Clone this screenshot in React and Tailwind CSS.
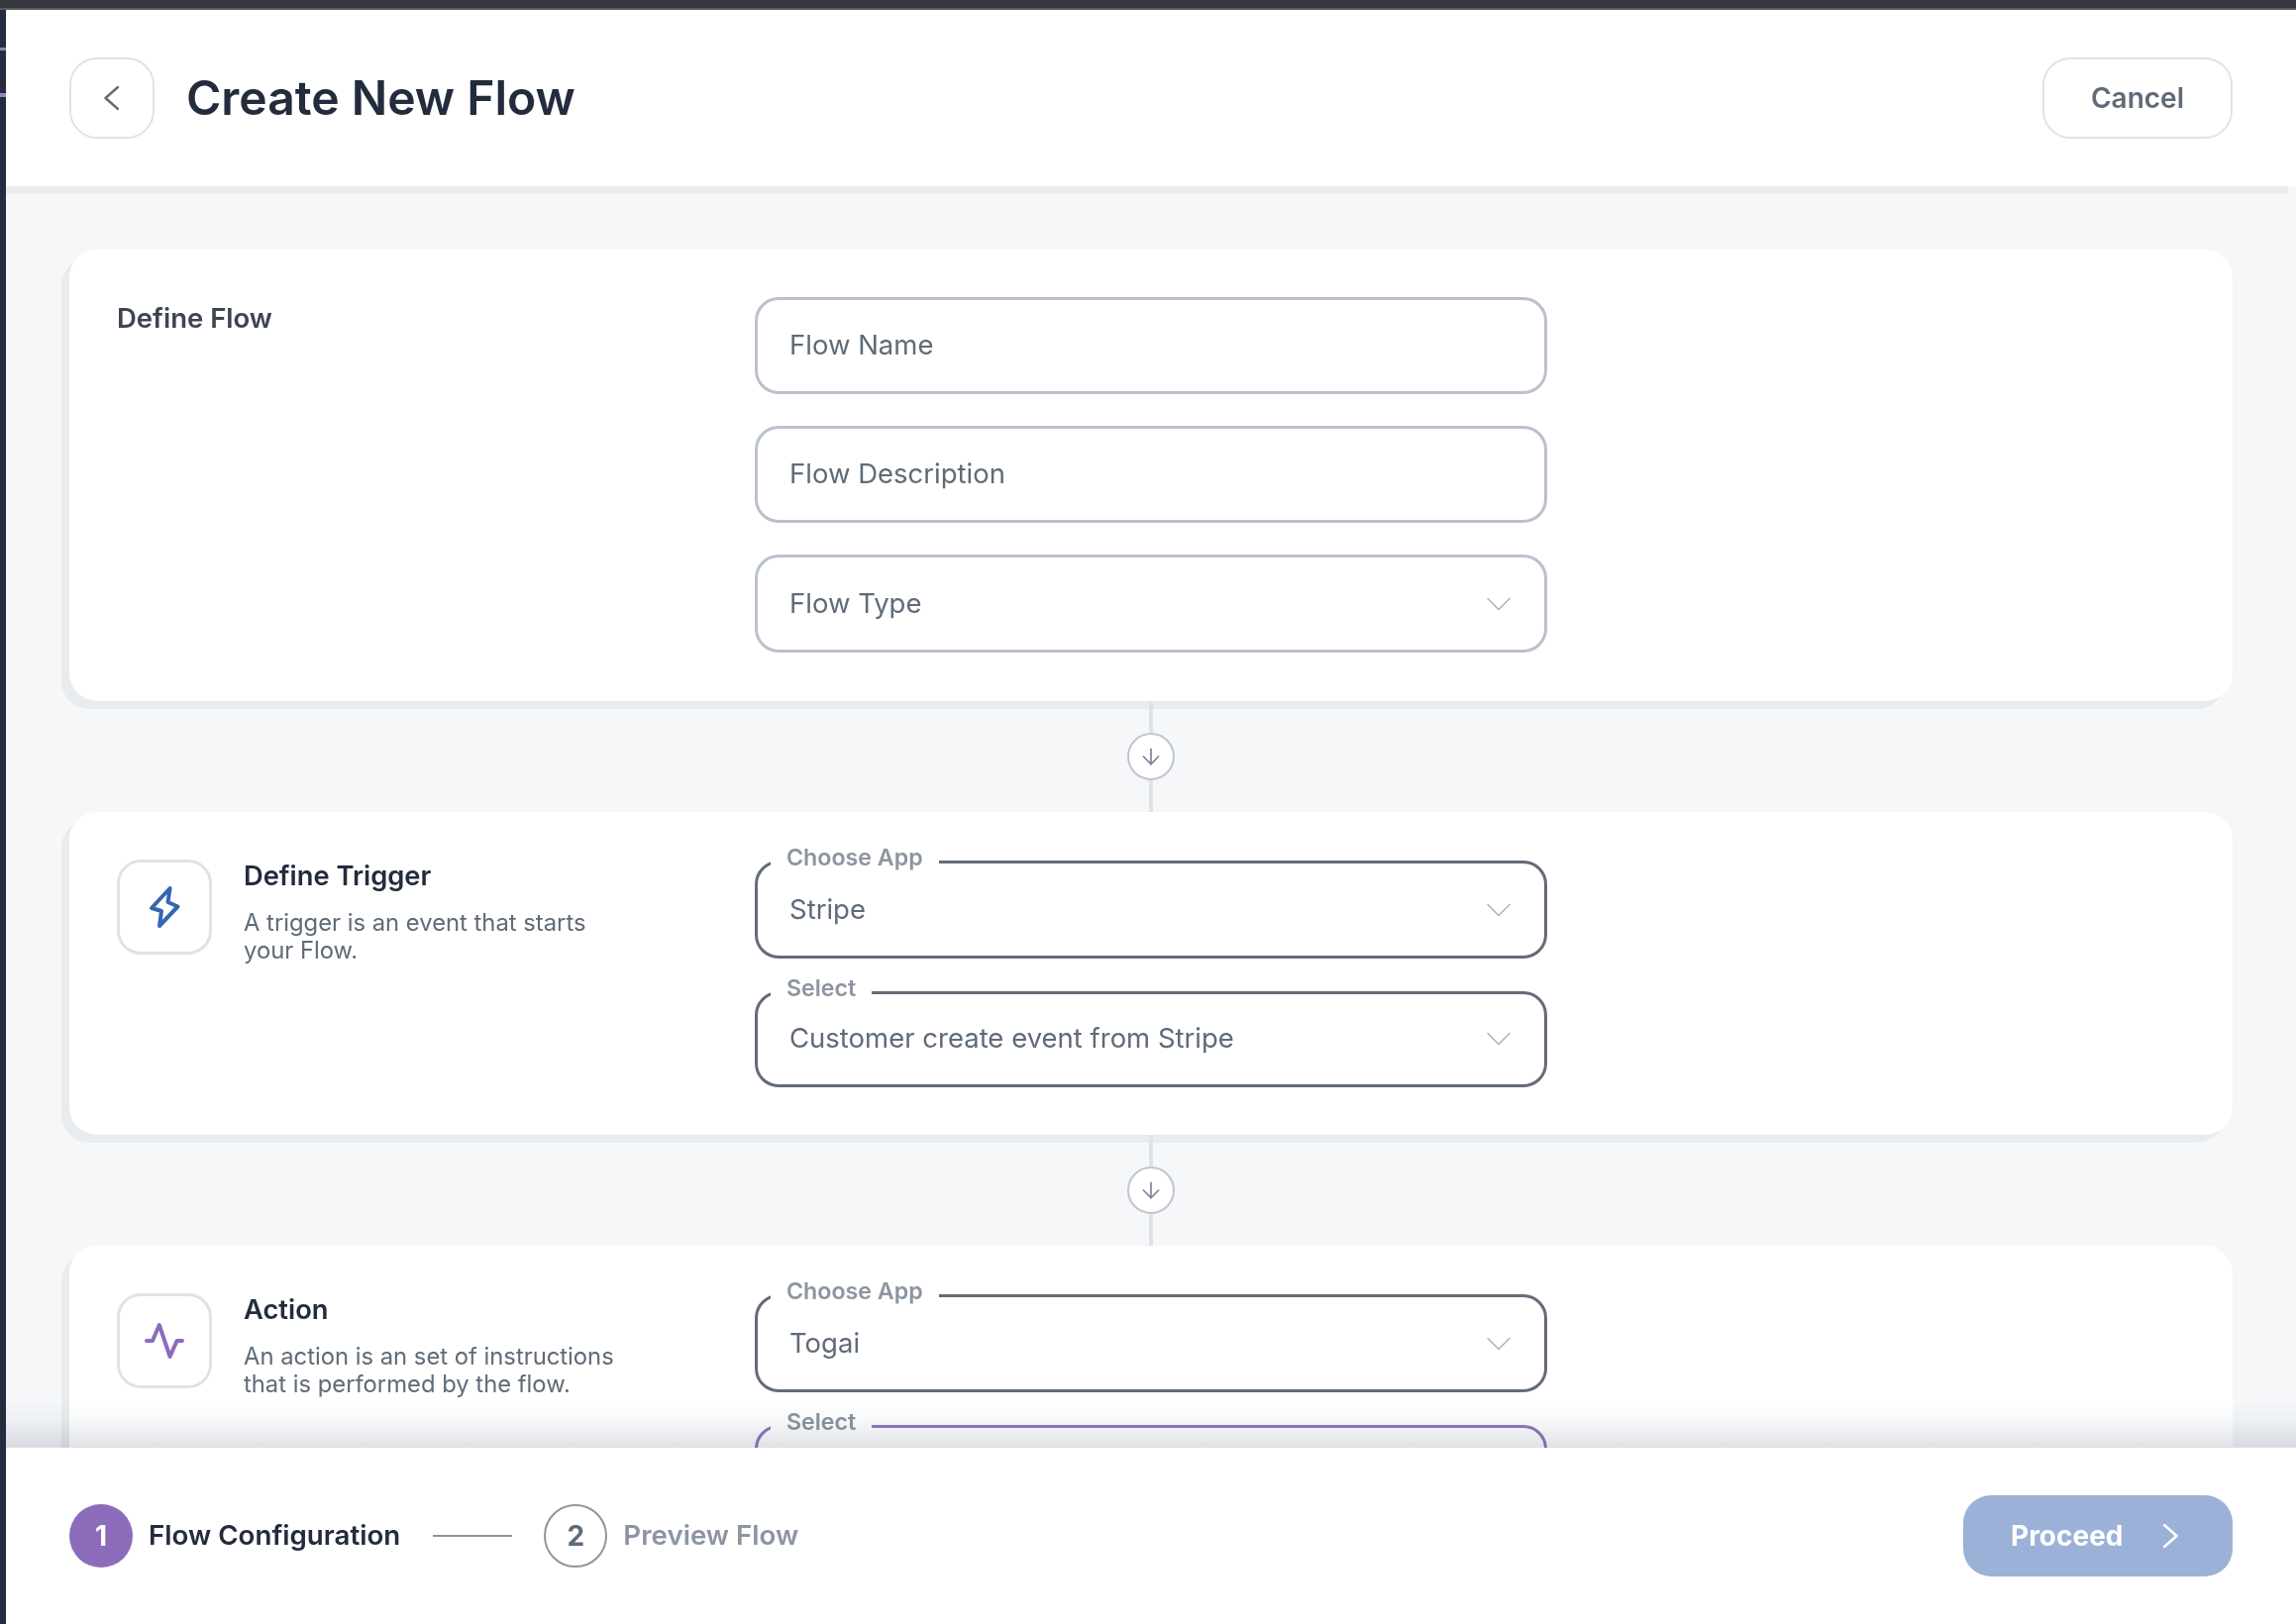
import { ChevronDown, ArrowDown } from "lucide-react";

const Input = ({ label, select, className }) => (
  <div className={`flex items-center justify-between rounded-[24px] border-[3px] border-[#b9c2cc] bg-white pl-[32px] pr-[24px] ${className || "h-[98px]"}`}>
    <span className="text-[27.5px] text-[#5f6b78]">{label}</span>
    {select && <ChevronDown className="h-[44px] w-[44px] text-[#a9b0ba]" strokeWidth={0.8} />}
  </div>
);

const Field = ({ legend, value, purple, short }) => (
  <fieldset
    className={`m-0 rounded-[24px] border-[3px] p-0 pl-[32px] pr-[24px] ${purple ? "border-[#9279c0]" : "border-[#636c78]"}`}
  >
    <legend className="relative top-[-4px] ml-[-19px] px-[16px] text-[23.2px] font-semibold leading-[28px] text-[#8c95a1]">{legend}</legend>
    <div className={`flex items-center justify-between ${short ? "h-[79px] pb-[13px]" : "h-[81px] pb-[12px]"}`}>
      <span className="text-[27.5px] text-[#5f6b78]">{value}</span>
      <ChevronDown className="h-[44px] w-[44px] text-[#a9b0ba]" strokeWidth={0.8} />
    </div>
  </fieldset>
);

const Connector = () => (
  <div className="relative flex h-[112px] items-center justify-center">
    <div className="absolute bottom-0 top-0 w-[4px] bg-[#dfe3e8]" />
    <div className="relative flex h-[48px] w-[48px] items-center justify-center rounded-full border-2 border-[#bfc6d0] bg-white">
      <ArrowDown className="h-[26px] w-[26px] text-[#7d8794]" strokeWidth={1.6} />
    </div>
  </div>
);

const Intro = ({ icon, title, children }) => (
  <div className="flex w-[644px] shrink-0 items-start pt-[12px]">
    <div className="flex h-[96px] w-[96px] shrink-0 items-center justify-center rounded-[24px] border-[3px] border-[#dfe3e8]">
      {icon}
    </div>
    <div className="ml-[32px] w-[400px]">
      <h3 className="text-[27.3px] font-semibold leading-[34px] text-[#232c3d]">{title}</h3>
      <p className="mt-[16px] text-[23.8px] leading-[28px] text-[#5f6b78]">{children}</p>
    </div>
  </div>
);

const Card = ({ children, className }) => (
  <section className={`flex rounded-[28px] bg-white px-[48px] shadow-[-8px_8px_0_0_#e9ecee] ${className || ""}`}>
    {children}
  </section>
);

export default function App() {
  return (
    <div className="relative flex h-[1640px] w-[2318px] flex-col overflow-hidden bg-[#252c3f] font-['Inter',sans-serif]">
      <div className="h-[10px] shrink-0 border-b-2 border-[#5a5a60] bg-[#36373c]" />
      {/* bits of the window behind, showing in the left strip */}
      <div className="absolute left-0 top-[48px] h-[3px] w-[6px] bg-[#8f7fb8]" />
      <div className="absolute left-0 top-[94px] h-[4px] w-[6px] bg-[#9b84c9]" />

      <div className="ml-[6px] flex min-h-0 flex-1 flex-col bg-[#f5f7f9]">
        {/* Header */}
        <header className="flex h-[178px] shrink-0 items-center justify-between bg-white pb-[1px] pl-[64px] pr-[64px]">
          <div className="flex items-center gap-[32px]">
            <button className="flex h-[82px] w-[86px] items-center justify-center rounded-[28px] border-2 border-[#dfe3e8] pr-[2px]">
              <svg width="15" height="24" viewBox="0 0 15 24" fill="none" stroke="#5f6b78" strokeWidth="2.4" strokeLinecap="round" strokeLinejoin="round">
                <path d="M14 1 1.5 12 14 23" />
              </svg>
            </button>
            <h1 className="text-[48px] font-semibold text-[#232c3d]">Create New Flow</h1>
          </div>
          <button className="flex h-[82px] w-[192px] items-center justify-center rounded-[28px] border-2 border-[#dfe3e8] text-[28px] font-semibold text-[#5f6b78]">
            Cancel
          </button>
        </header>
        <div className="mr-[8px] h-[8px] shrink-0 bg-[#e9ecee]" />

        {/* Scrolling content */}
        <main className="relative min-h-0 flex-1 overflow-hidden">
          <div className="ml-[64px] mr-[64px] pt-[56px]">
            <Card className="h-[456px] pt-[48px]">
              <div className="w-[644px] shrink-0">
                <h3 className="pt-[4px] text-[27.5px] font-semibold leading-[34px] text-[#3d4551]">Define Flow</h3>
              </div>
              <div className="flex w-[800px] flex-col gap-[32px]">
                <Input label="Flow Name" />
                <Input label="Flow Description" />
                <Input label="Flow Type" select className="h-[99px]" />
              </div>
            </Card>
            <Connector />
            <Card className="h-[326px] pt-[36px]">
              <Intro
                title="Define Trigger"
                icon={
                  <svg width="48" height="48" viewBox="0 0 48 48" fill="none" stroke="#3367b5" strokeWidth="4" strokeLinejoin="round" strokeLinecap="round">
                    <path d="M29.6 5 11 25l10 3-2 15 18.5-19.5-10-4.5z" />
                  </svg>
                }
              >
                A trigger is an event that starts your Flow.
              </Intro>
              <div className="flex w-[800px] flex-col gap-[20px]">
                <Field legend="Choose App" value="Stripe" />
                <Field legend="Select" value="Customer create event from Stripe" short />
              </div>
            </Card>
            <Connector />
            <Card className="h-[326px] pt-[36px]">
              <Intro
                title="Action"
                icon={
                  <svg width="48" height="48" viewBox="0 0 48 48" fill="none" stroke="#8c6cba" strokeWidth="4" strokeLinejoin="round" strokeLinecap="round">
                    <path d="M6 24h6l6.8-16 10.8 32 7-16H42" />
                  </svg>
                }
              >
                An action is an set of instructions that is performed by the flow.
              </Intro>
              <div className="flex w-[800px] flex-col gap-[20px]">
                <Field legend="Choose App" value="Togai" />
                <Field legend="Select" value="" purple short />
              </div>
            </Card>
          </div>
          {/* fade above the footer */}
          <div className="pointer-events-none absolute inset-x-0 bottom-0 h-[48px] bg-gradient-to-b from-white via-[#f8f9fa] via-40% to-[#dfe1e6] mix-blend-multiply" />
        </main>

        {/* Footer */}
        <footer className="flex h-[178px] shrink-0 items-center justify-between bg-white pl-[64px] pr-[64px]">
          <div className="flex items-center">
            <span className="flex h-[64px] w-[64px] items-center justify-center rounded-full bg-[#8c6cba] text-[28px] font-bold text-white">1</span>
            <span className="ml-[16px] text-[27.7px] font-semibold text-[#232c3d]">Flow Configuration</span>
            <span className="ml-[33px] h-[2px] w-[80px] bg-[#8c95a1]" />
            <span className="ml-[32px] flex h-[64px] w-[64px] items-center justify-center rounded-full border-2 border-[#8c95a1] text-[28px] font-bold text-[#5f6b78]">2</span>
            <span className="ml-[16px] text-[27.7px] font-semibold text-[#8c95a1]">Preview Flow</span>
          </div>
          <button className="flex h-[82px] w-[272px] items-center gap-[40px] rounded-[28px] bg-[#9bb1d8] pl-[48px] text-[28px] font-bold text-white">
            Proceed
            <svg width="15" height="24" viewBox="0 0 15 24" fill="none" stroke="white" strokeWidth="2.4" strokeLinecap="round" strokeLinejoin="round">
              <path d="M1 1 13.5 12 1 23" />
            </svg>
          </button>
        </footer>
      </div>
    </div>
  );
}
